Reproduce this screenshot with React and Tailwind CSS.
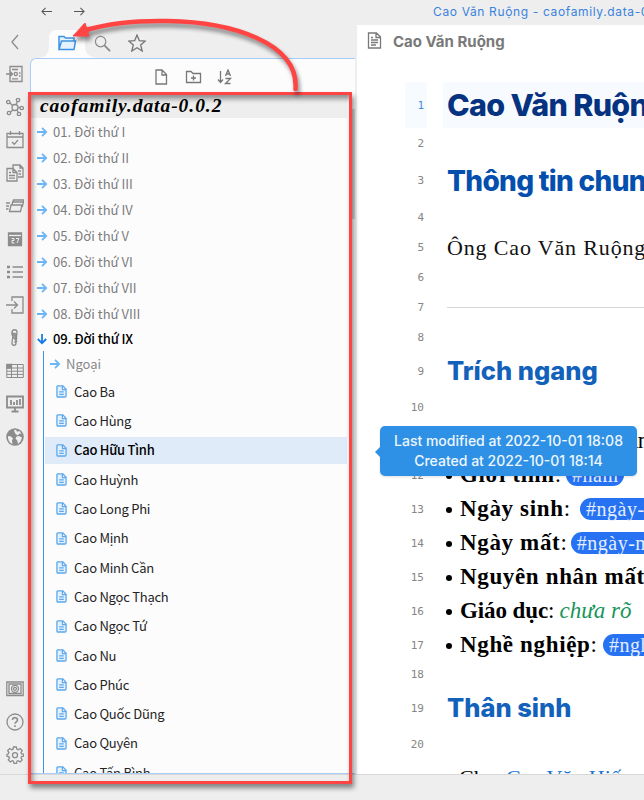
import React from "react";

const folders = ["01. Đời thứ I", "02. Đời thứ II", "03. Đời thứ III", "04. Đời thứ IV", "05. Đời thứ V", "06. Đời thứ VI", "07. Đời thứ VII", "08. Đời thứ VIII"];
const files = ["Cao Ba", "Cao Hùng", "Cao Hữu Tình", "Cao Huỳnh", "Cao Long Phi", "Cao Mịnh", "Cao Minh Cần", "Cao Ngọc Thạch", "Cao Ngọc Tứ", "Cao Nu", "Cao Phúc", "Cao Quốc Dũng", "Cao Quyên", "Cao Tấn Bình"];

const Svg = ({ children, className = "size-[18px] text-[#8c8c8c]", box = "0 0 18 18", sw = 1.3 }) => (
  <svg viewBox={box} className={"block shrink-0 " + className} fill="none" stroke="currentColor" strokeWidth={sw}>{children}</svg>
);

const railTop = [
  <path d="M12 2 6 9l6 7" />,
  <g><path d="M4 6V1.500h12v15H4V12M6 4.500h6M13 8h1.500M13 11h1.500M6 13.800h6M0 9h4" /><path d="M4 6.500 6.500 9 4 11.500z" fill="currentColor" /><circle cx="9.800" cy="9" r="1.600" /></g>,
  <g><circle cx="9" cy="9.5" r="3" /><circle cx="2.3" cy="4" r="1.7" /><circle cx="12" cy="2" r="1.7" /><circle cx="15.7" cy="10" r="1.7" /><circle cx="13" cy="16" r="1.7" /><circle cx="3" cy="15" r="1.7" /><path d="m3.8 5 3 2.5M11.3 3.7 10 6.5M12 9.6h2M11 12l1.3 2.5M7 12l-2.6 2" /></g>,
  <path d="M1 2.5h16v14H1zM1 6h16M4.5 0v4M13.5 0v4M6 11l2.3 2.3L12 9" />,
  <g><path d="M7 4V1h7l3 3v9h-5M14 1v3h3M12 7h3M12.500 10h2.500" /><path d="M1 4.500h6l4 4V17H1zM7 4.500v4h4M3 8.500h2M3 11.500h6M3 14.200h6" /></g>,
  <g><path d="M5 8h11l-1.500 6.500H3.500zM6 8l.6-3H17.300l-1 5M7 5l.5-2H18l-.7 3" /><path d="M0 6h4M0 9h3M0 12h2.500" /></g>,
  <g><path d="M2.5 3h13v12.5h-13z" fill="currentColor" /><path d="M3 5.5h12" stroke="#eee" /><path d="M5.500 8.500h2.500v2h-2v2.500h2.500M10 8.500h3L11 13" stroke="#eee" strokeWidth="1" /></g>,
  <g><path d="M6.500 4H17M6.500 9H17M6.500 14H17" /><path d="M1 4h3M1 9h3M1 14h3" strokeWidth="2.600" /></g>,
  <path d="M6 5V1h11v16H6v-4M0 9h11M8 5.5 11.5 9 8 12.5" />,
  <path d="M6 6V3c0-3 5-3 5 0l-1 11c0 3-4 3-4 0l1-8c0-2 3-2 3 0L9 14M6 3l5 7M6 6l5 7" />,
  <g><path d="M.8 2.500h16.500v13H.8zM.8 6h16.500M.8 9.200h16.500M.8 12.400h16.500M5.500 2.500v13M11.500 2.500v13" strokeWidth="1" /><path d="M1 2.500h4.500V6H1z" fill="currentColor" /></g>,
  <g><path d="M1 1.500h16v11H1z" strokeWidth="1.8" /><path d="M5 10V5M8 10V7M11 10V5M14 10V4M9 12v4M5.5 16.5h7" strokeWidth="1.8" /></g>,
  <g><circle cx="9" cy="9" r="8.800" fill="currentColor" stroke="none" /><path d="M8 2l2-.3 1 2 2.500-.7 2 3-2-.4-1.500 1.700-2-.8L8.500 4zM10.500 8.500 13 8l3 1.500-1.500 4-2.500 2.500-.8-3.500-1.700-2zM2 8l3 .5 2 2-1 2 .5 3.500C3.500 15 1.800 12 2 8z" fill="#eeeeee" stroke="none" /></g>,
];

const railBottom = [
  <g><path d="M.8 2h16.400v13.500H.8zM3 4h12v9.500H3z" /><circle cx="9" cy="8.800" r="3.500" /><circle cx="9" cy="8.800" r="1.500" /></g>,
  <g><circle cx="9" cy="9" r="8" /><path d="M6.5 7c0-3.2 5-3 5 0 0 1.8-2.5 1.8-2.5 3.8M9 12.3V14" strokeWidth="1.6" /></g>,
  <g><path d="m7.5 1-.5 2.2-1.2.5-2-1.2-2.1 2 1.2 2.1-.5 1.2L1 8.2v2l1.8.4.7 1.4-1.2 2 2 1.9 2-1.2 1.2.5.5 2.3h2.5l.5-2.3 1.2-.5 2 1.2 2-1.9-1.2-2 .6-1.4 2-.4v-2l-2-.4-.6-1.2 1.2-2.1-2-2-2 1.2-1.2-.5L10.300 1z" /><circle cx="9" cy="9.200" r="2.5" /></g>,
];

const Arrow = ({ down }) => (
  <svg viewBox="0 0 12 12" className={"block size-[12px] shrink-0 " + (down ? "rotate-90 text-[#157de6]" : "text-[#6db5f4]")} fill="none" stroke="currentColor" strokeWidth="1.8">
    <path d="M1 6h9M6 1.800 10.200 6 6 10.200" />
  </svg>
);

const DocIcon = () => (
  <Svg box="0 0 12 14" className="h-[13px] w-[11px] text-[#5ba8ec]" sw={1.4}>
    <path d="M2 .9h5.500L11 4.500v7.200q0 1.300-1.300 1.300H2.200Q1 13 1 11.700V2Q1 .9 2 .9zM7 1v4h4" fill="#e4f1fd" />
    <path d="M3.500 7.500h5M3.500 10.200h5" />
  </Svg>
);

const Tag = ({ children, className = "ml-[5px]" }) => (
  <span className={"inline-flex h-[22px] items-center rounded-full bg-[#2672f3] px-[6px] text-[20px] font-normal tracking-[0.5px] text-[#e4eeff] " + className}>{children}</span>
);

const Item = ({ label, tracking = "tracking-[0.65px]", children }) => (
  <span className="flex items-center text-[23px]">
    <span className="mr-[8px] -ml-px mt-[2px] size-[6px] rounded-full bg-black" />
    <b className={"font-bold " + tracking}>{label}</b>{children}
  </span>
);

const lines = [
  ["h-[46px]", <h1 className="text-[30.500px] font-extrabold tracking-[-0.7px] text-[#06337f]">Cao Văn Ruộng</h1>],
  ["h-[31px]"],
  ["h-[43px]", <h2 className="text-[28px] font-extrabold tracking-[-0.68px] text-[#044fae]">Thông tin chung</h2>],
  ["h-[30px]"],
  ["h-[30px]", <p className="font-['Liberation_Serif',serif] text-[22px] tracking-[0.85px] text-[#111]">Ông Cao Văn Ruộng sinh</p>],
  ["h-[30px]"],
  ["h-[30px]", <hr className="w-[220px] border-[#d6d6d6]" />],
  ["h-[30px]"],
  ["h-[39px]", <h3 className="text-[25.500px] font-extrabold tracking-[0px] text-[#1261bb]">Trích ngang</h3>],
  ["h-[33px]"],
  ["h-[34px]", <Item label="Họ và tên"><span className="tracking-[-0.5px]">: Cao Văn Ruộng</span></Item>],
  ["h-[34px]", <Item label="Giới tính">:<Tag>#nam</Tag></Item>],
  ["h-[34px]", <Item label="Ngày sinh">:<Tag className="ml-[10px]">#ngày-sinh</Tag></Item>],
  ["h-[34px]", <Item label="Ngày mất">:<Tag className="ml-[4px]">#ngày-mất</Tag></Item>],
  ["h-[34px]", <Item label="Nguyên nhân mất">:</Item>],
  ["h-[34px]", <Item label="Giáo dục" tracking="tracking-[-0.1px]">:<i className="ml-[5px] tracking-[0px] text-[#18955a]">chưa rõ</i></Item>],
  ["h-[34px]", <Item label="Nghề nghiệp">:<Tag className="ml-[6px]">#nghề</Tag></Item>],
  ["h-[25px]"],
  ["h-[42px]", <h3 className="text-[25.500px] font-extrabold tracking-[0px] text-[#1261bb]">Thân sinh</h3>],
  ["h-[30px]"],
  ["h-[37px]", <span className="ml-[12px] text-[22px]">Cha:&nbsp;<span className="text-[#1874d1]">Cao Văn Hiếu</span></span>],
];

export default function App() {
  return (
    <div className="relative flex h-[800px] w-[644px] flex-col overflow-hidden bg-[#eeeeee] font-['Inter',sans-serif]">
      <div className="flex h-[774px] w-full shrink-0">
        <aside className="flex w-[30px] shrink-0 flex-col items-center pt-[25px]">
          {railTop.map((x, i) => <div key={i} className={"flex w-[30px] shrink-0 items-center justify-center " + (i === 0 ? "-ml-px h-[33px]" : "-mt-px mb-px h-[33px]")}><Svg>{x}</Svg></div>)}
          <div className="h-[218px] shrink-0" />
          {railBottom.map((x, i) => <div key={i} className="flex h-[33px] w-[30px] shrink-0 items-center justify-center"><Svg>{x}</Svg></div>)}
        </aside>

        <section className="flex w-[327px] shrink-0 flex-col pr-[2px]">
          <div className="flex h-[30px] items-start gap-[22px] pt-[6px] pl-[11px] text-[#555]">
            <Svg box="0 0 12 12" className="size-[11px]" sw={1.1}><path d="M12 6H1M5 2 1 6l4 4" /></Svg>
            <Svg box="0 0 12 12" className="size-[11px]" sw={1.1}><path d="M0 6h11M7 2l4 4-4 4" /></Svg>
          </div>
          <div className="flex h-[28px] items-center">
            <svg viewBox="0 0 70 28" className="-mr-[6px] ml-[3px] h-[28px] w-[70px] shrink-0">
              <path d="M6 28q10-1 10-12V8q0-8 8-8h20q8 0 8 8v8q0 11 12 12z" fill="#fcfcfd" />
              <g fill="none" stroke="#3c93e4" strokeWidth="1.500"><path d="M26 19V6.500h5l1.500 1.500H41v3M26 19.500l2.500-8.500H42.500L41 19.500z" fill="#e5f2fe" /></g>
            </svg>
            <Svg className="-ml-[3px] size-[17px] -translate-y-px text-[#8c8c8c]"><circle cx="7" cy="7" r="5.500" /><path d="m11 11 6 6" strokeWidth="2" /></Svg>
            <Svg className="ml-[17px] size-[18px] -translate-y-px text-[#777]"><path d="m9 1 2.300 5.600 6 .5-4.600 3.900L14.200 17 9 13.700 3.800 17l1.500-6L.7 7.100l6-.5z" /></Svg>
          </div>
          <div className="flex min-h-0 flex-1 flex-col rounded-tl-[6px] border-t border-b border-l border-[#aacdf5] bg-[#fcfcfd]">
            <div className="flex h-[35px] shrink-0 items-center pl-[122px] text-[#777]">
              <Svg className="h-[16px] w-[16px]" box="0 0 16 16"><path d="M3 1h6l4.500 4.500V15H3zM9 1v5h4.500" /></Svg>
              <Svg className="ml-[16px] h-[16px] w-[17px]" box="0 0 17 16"><path d="M1.500 13.500v-11H6L8 4.500h7.500v9zM8.500 6.500v5M6 9h5" /></Svg>
              <Svg className="ml-[15px] h-[16px] w-[16px]" box="0 0 16 16"><path d="M3.500 2v11M1 10.500l2.500 3 2.500-3M8.500 7 11 1l2.500 6M9.300 5h3.400M8.500 9.500h5l-5 5h5" /></Svg>
            </div>
            <div className="flex h-[24px] w-full max-w-[316px] shrink-0 items-center bg-[#eee] pl-[9px] font-['Liberation_Serif',serif] text-[19.500px] font-bold tracking-[0.95px] text-black italic">caofamily.data-0.0.2</div>
            <div className="relative flex min-h-0 flex-1 flex-col overflow-hidden font-['Noto_Sans_CJK_SC','Noto_Sans',sans-serif] text-[13px] tracking-[0.02px]">
              {folders.map((f) => <div key={f} className="flex h-[26px] shrink-0 items-center gap-[5px] pt-px pl-[5px] text-[#7c7c7c]"><Arrow /><span>{f}</span></div>)}
              <div className="flex h-[25px] shrink-0 items-center gap-[5px] pl-[5px] font-medium tracking-[-0.12px] text-black"><Arrow down /><span>09. Đời thứ IX</span></div>
              <div className="ml-[12px] flex flex-col border-l border-[#3d92e5]">
                <div className="flex h-[26px] shrink-0 items-center gap-[5px] pl-[5px] text-[#888]"><Arrow /><span>Ngoại</span></div>
                {files.map((f, i) => (
                  <div key={f} className="flex h-[29.300px] shrink-0 items-center tracking-[-0.24px]">
                    <div className={"ml-px flex h-[27px] w-[302px] items-center gap-[7px] pl-[11px] " + (i === 2 ? "bg-[#dfebf9] font-medium text-black" : "text-[#242424]")}><DocIcon /><span>{f}</span></div>
                  </div>
                ))}
              </div>
            </div>
          </div>
        </section>

        <main className="flex min-w-0 flex-1 flex-col">
          <div className="h-[25px] shrink-0 overflow-hidden pt-[3px] pl-[76px] text-[12px] leading-[18px] tracking-[0.64px] whitespace-nowrap text-[#3b82df]">Cao Văn Ruộng - caofamily.data-0.0.2</div>
          <div className="flex min-h-0 flex-1 flex-col bg-white">
            <div className="flex h-[57px] shrink-0 items-start gap-[11px] pt-[7px] pl-[10px] text-[15px] leading-[20px] font-bold tracking-[0px] text-[#797979]">
              <Svg className="h-[17px] w-[15px]" box="0 0 15 17"><path d="M1.500 1h8l4 4v11h-12zM9 1v4.500h4.500M4 8h7M4 10.500h7M4 13h5M4 5.500h2" /></Svg>
              <span>Cao Văn Ruộng</span>
            </div>
            <div className="flex min-h-0 flex-1 flex-col overflow-hidden">
              {lines.map(([h, content], i) => (
                <div key={i} className={"flex shrink-0 items-stretch whitespace-nowrap " + h}>
                  <div className={"ml-[48px] flex w-[22px] shrink-0 items-center justify-end pt-[2px] pr-[3px] font-['DejaVu_Sans_Mono',monospace] text-[11px] " + (i === 0 ? "bg-[#f7fbff] text-[#3c8ee9]" : "text-[#858585]")}>{i < 20 ? i + 1 : ""}</div>
                  <div className={"ml-[16px] flex min-w-0 flex-1 items-center overflow-hidden pl-[4px] " + (i === 0 ? "bg-[#f7fbff]" : "") + (i > 9 && i !== 18 ? " font-['Liberation_Serif',serif]" : "")}>{content}</div>
                </div>
              ))}
            </div>
          </div>
        </main>
      </div>
      <footer className="h-[26px] shrink-0 border-t border-[#d8d8d8]" />

      <div className="absolute top-[109px] left-[352px] h-[110px] w-[3px] bg-[#d8d8d8]" />
      <div className="absolute top-[426px] left-[380px] flex h-[50px] w-[257px] flex-col items-center justify-center rounded-[5px] bg-[#2f91e6] text-[14px] leading-[20px] font-medium text-[#eef7ff] shadow-sm">
        <span className="absolute top-[21px] -left-[5px] border-y-[5px] border-r-[5px] border-y-transparent border-r-[#2f91e6]" />
        <span>Last modified at 2022-10-01 18:08</span><span>Created at 2022-10-01 18:14</span>
      </div>
      <div className="absolute top-[92px] left-[28px] h-[692px] w-[324px] border-[3px] border-[#ff4444] shadow-[2px_4px_5px_rgba(0,0,0,0.45),inset_2px_4px_5px_rgba(0,0,0,0.4)]" />
      <svg viewBox="0 0 644 130" className="absolute top-0 left-0 h-[130px] w-[644px] drop-shadow-[2px_4px_2px_rgba(0,0,0,0.45)]">
        <path d="M295.500 89C299 42 230 22 168 21Q120 20 86 30" fill="none" stroke="#ff4444" strokeWidth="4.500" strokeLinecap="round" />
        <path d="M73 36 85 23l4 13z" fill="#ff4444" stroke="#ff4444" />
      </svg>
    </div>
  );
}
